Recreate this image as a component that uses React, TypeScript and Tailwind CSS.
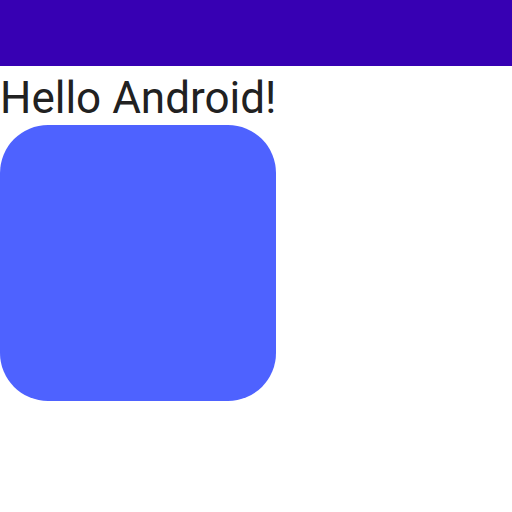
export default function App() {
  return (
    <div className="w-[512px] h-[512px] bg-white font-['Roboto',sans-serif]">
      <div className="h-[66px] bg-[#3700b3]" />
      <div className="text-[44px] leading-[52px] pt-[6px] pb-[1px] text-[#212121]">
        Hello Android!
      </div>
      <div className="w-[276px] h-[276px] rounded-[48px] bg-[#4e62ff]" />
    </div>
  );
}
